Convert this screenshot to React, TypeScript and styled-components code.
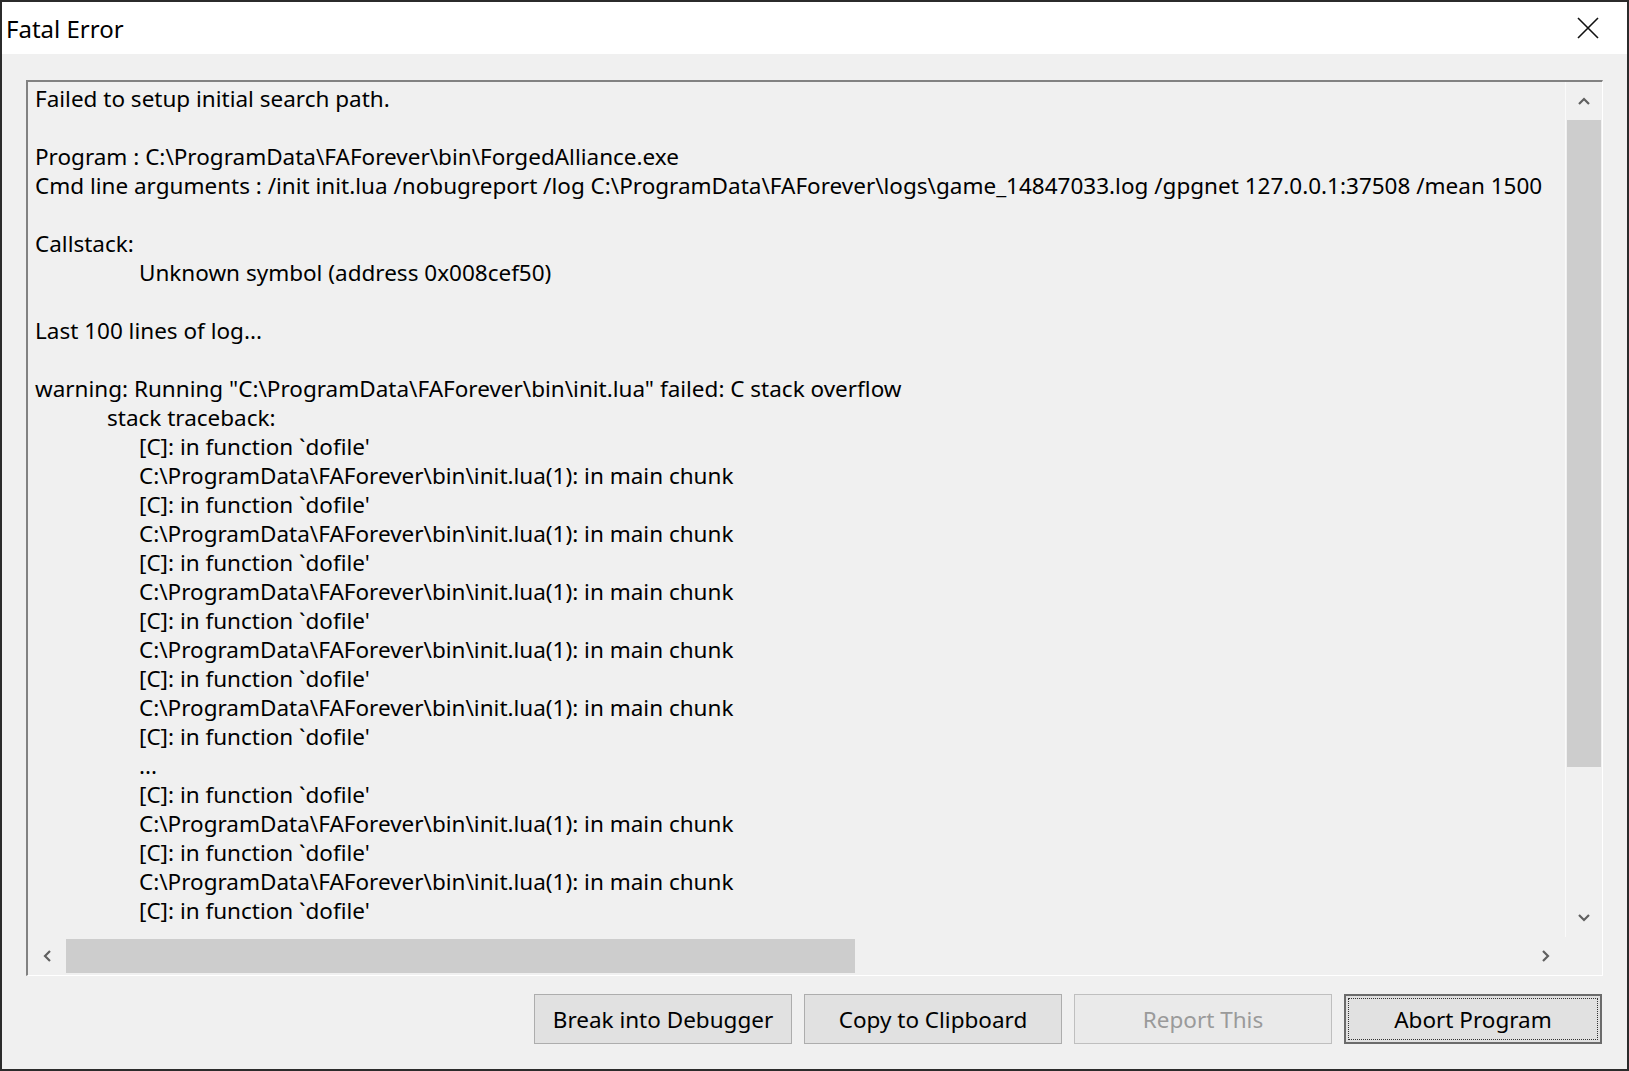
import styled, { createGlobalStyle } from 'styled-components';

const GlobalStyle = createGlobalStyle`
  html, body { margin: 0; padding: 0; background: #f0f0f0; }
  body { font-family: "Noto Sans", "Open Sans", sans-serif; }
`;

const lines: { text: string; indent?: number }[] = [
  { text: 'Failed to setup initial search path.' },
  { text: '' },
  { text: 'Program : C:\\ProgramData\\FAForever\\bin\\ForgedAlliance.exe' },
  { text: 'Cmd line arguments : /init init.lua /nobugreport /log C:\\ProgramData\\FAForever\\logs\\game_14847033.log /gpgnet 127.0.0.1:37508 /mean 1500' },
  { text: '' },
  { text: 'Callstack:' },
  { text: 'Unknown symbol (address 0x008cef50)', indent: 104 },
  { text: '' },
  { text: 'Last 100 lines of log...' },
  { text: '' },
  { text: 'warning: Running "C:\\ProgramData\\FAForever\\bin\\init.lua" failed: C stack overflow' },
  { text: 'stack traceback:', indent: 72 },
  { text: "[C]: in function `dofile'", indent: 104 },
  { text: 'C:\\ProgramData\\FAForever\\bin\\init.lua(1): in main chunk', indent: 104 },
  { text: "[C]: in function `dofile'", indent: 104 },
  { text: 'C:\\ProgramData\\FAForever\\bin\\init.lua(1): in main chunk', indent: 104 },
  { text: "[C]: in function `dofile'", indent: 104 },
  { text: 'C:\\ProgramData\\FAForever\\bin\\init.lua(1): in main chunk', indent: 104 },
  { text: "[C]: in function `dofile'", indent: 104 },
  { text: 'C:\\ProgramData\\FAForever\\bin\\init.lua(1): in main chunk', indent: 104 },
  { text: "[C]: in function `dofile'", indent: 104 },
  { text: 'C:\\ProgramData\\FAForever\\bin\\init.lua(1): in main chunk', indent: 104 },
  { text: "[C]: in function `dofile'", indent: 104 },
  { text: '...', indent: 104 },
  { text: "[C]: in function `dofile'", indent: 104 },
  { text: 'C:\\ProgramData\\FAForever\\bin\\init.lua(1): in main chunk', indent: 104 },
  { text: "[C]: in function `dofile'", indent: 104 },
  { text: 'C:\\ProgramData\\FAForever\\bin\\init.lua(1): in main chunk', indent: 104 },
  { text: "[C]: in function `dofile'", indent: 104 },
];

const Chevron = ({ dir }: { dir: 'up' | 'down' | 'left' | 'right' }) => {
  const rot = { up: 0, right: 90, down: 180, left: 270 }[dir];
  return (
    <svg width="14" height="14" viewBox="0 0 14 14" style={{ transform: `rotate(${rot}deg)` }}>
      <path d="M2 10 L7 5 L12 10" fill="none" stroke="#606060" strokeWidth="2.2" />
    </svg>
  );
};

export default function App() {
  return (
    <Window>
      <GlobalStyle />
      <TitleBar>
        <Title>Fatal Error</Title>
        <Close>
          <svg width="22" height="22" viewBox="0 0 22 22">
            <path d="M1 1 L21 21 M21 1 L1 21" stroke="#111" strokeWidth="1.6" />
          </svg>
        </Close>
      </TitleBar>
      <Body>
        <TextBox>
          <Content>
            {lines.map((l, i) => (
              <Line key={i} $indent={l.indent ?? 0}>{l.text || '\u00a0'}</Line>
            ))}
          </Content>
          <VScroll>
            <Arrow><Chevron dir="up" /></Arrow>
            <VTrack><VThumb /></VTrack>
            <Arrow><Chevron dir="down" /></Arrow>
          </VScroll>
          <HScroll>
            <HArrow><Chevron dir="left" /></HArrow>
            <HTrack><HThumb /></HTrack>
            <HArrow><Chevron dir="right" /></HArrow>
          </HScroll>
          <Corner />
        </TextBox>
        <Buttons>
          <Button>Break into Debugger</Button>
          <Button>Copy to Clipboard</Button>
          <Button $disabled>Report This</Button>
          <Button $default>Abort Program</Button>
        </Buttons>
      </Body>
    </Window>
  );
}

const Window = styled.div`
  width: 1629px;
  height: 1071px;
  box-sizing: border-box;
  border: 2px solid #2b2b2b;
  background: #f0f0f0;
  display: flex;
  flex-direction: column;
  overflow: hidden;
`;

const TitleBar = styled.div`
  height: 52px;
  background: #fff;
  display: flex;
  align-items: center;
  justify-content: space-between;
  padding: 0 28px 0 4px;
`;

const Title = styled.div`
  font-size: 24px;
  color: #000;
`;

const Close = styled.div`
  display: flex;
`;

const Body = styled.div`
  flex: 1;
  padding: 26px 24px 0 24px;
  display: flex;
  flex-direction: column;
`;

const TextBox = styled.div`
  width: 1577px;
  height: 896px;
  box-sizing: border-box;
  border-top: 2px solid #828282;
  border-left: 2px solid #828282;
  border-right: 1px solid #fff;
  border-bottom: 1px solid #fff;
  display: grid;
  grid-template-columns: 1fr 37px;
  grid-template-rows: 1fr 38px;
  overflow: hidden;
`;

const Content = styled.div`
  overflow: hidden;
  padding: 2px 0 0 7px;
  font-size: 22.5px;
  color: #000;
  white-space: pre;
`;

const Line = styled.div<{ $indent: number }>`
  height: 29px;
  line-height: 29px;
  padding-left: ${(p) => p.$indent}px;
`;

const VScroll = styled.div`
  display: flex;
  flex-direction: column;
  background: #f0f0f0;
  border-left: 1px solid #fafafa;
`;

const Arrow = styled.div`
  height: 38px;
  display: flex;
  align-items: center;
  justify-content: center;
`;

const VTrack = styled.div`
  flex: 1;
`;

const VThumb = styled.div`
  width: 34px;
  margin-left: 1px;
  height: 647px;
  background: #cdcdcd;
`;

const HScroll = styled.div`
  display: flex;
  align-items: stretch;
  background: #f0f0f0;
`;

const HArrow = styled.div`
  width: 38px;
  display: flex;
  align-items: center;
  justify-content: center;
`;

const HTrack = styled.div`
  flex: 1;
  display: flex;
  align-items: center;
`;

const HThumb = styled.div`
  width: 789px;
  height: 34px;
  background: #cdcdcd;
`;

const Corner = styled.div`
  background: #f0f0f0;
`;

const Buttons = styled.div`
  display: flex;
  justify-content: flex-end;
  gap: 12px;
  margin-top: 18px;
  padding-right: 1px;
`;

const Button = styled.button<{ $disabled?: boolean; $default?: boolean }>`
  width: 258px;
  height: 50px;
  box-sizing: border-box;
  border: ${(p) => (p.$default ? '2px solid #6b6b6b' : '1px solid ' + (p.$disabled ? '#bfbfbf' : '#adadad'))};
  outline: ${(p) => (p.$default ? '1px dotted #333' : 'none')};
  outline-offset: -5px;
  background: ${(p) => (p.$disabled ? '#eaeaea' : '#e1e1e1')};
  color: ${(p) => (p.$disabled ? '#9a9a9a' : '#000')};
  font-family: "Noto Sans", "Open Sans", sans-serif;
  font-size: 22.5px;
  padding: 0;
`;
